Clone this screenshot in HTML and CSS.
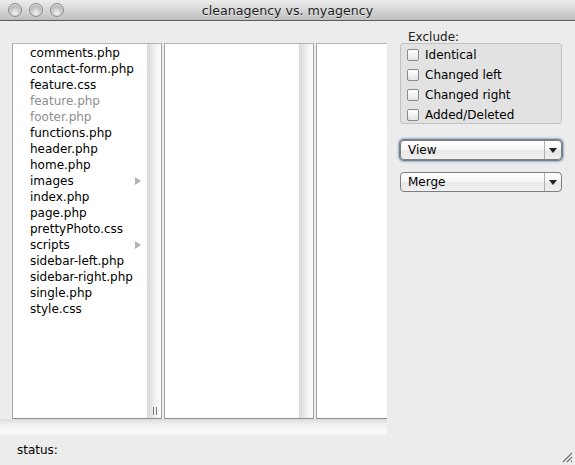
FILE: index.html
```html
<!DOCTYPE html>
<html lang="en">

<head>
    <meta charset="utf-8">
    <meta name="viewport" content="width=device-width, initial-scale=1.0">
    <title>cleanagency vs. myagency</title>
    <link rel="stylesheet" href="styles.css">
</head>

<body>
    <div class="window">

        <header class="titlebar">
            <div class="lights">
                <span class="light"></span>
                <span class="light"></span>
                <span class="light"></span>
            </div>
            <div class="title">cleanagency vs. myagency</div>
            <div></div>
        </header>

        <main class="content">
            <section class="browser">
                <div class="columns">
                    <div class="column">
                        <ul class="files">
                            <li>comments.php</li>
                            <li>contact-form.php</li>
                            <li>feature.css</li>
                            <li class="same">feature.php</li>
                            <li class="same">footer.php</li>
                            <li>functions.php</li>
                            <li>header.php</li>
                            <li>home.php</li>
                            <li class="folder">images</li>
                            <li>index.php</li>
                            <li>page.php</li>
                            <li>prettyPhoto.css</li>
                            <li class="folder">scripts</li>
                            <li>sidebar-left.php</li>
                            <li>sidebar-right.php</li>
                            <li>single.php</li>
                            <li>style.css</li>
                        </ul>
                        <div class="scroller">
                            <span class="grip"></span>
                        </div>
                    </div>
                    <div class="column">
                        <ul class="files"></ul>
                        <div class="scroller"></div>
                    </div>
                    <div class="column">
                        <ul class="files"></ul>
                        <div class="scroller"></div>
                    </div>
                </div>
                <div class="hscroll"></div>
            </section>

            <aside class="side">
                <div class="label">Exclude:</div>
                <div class="group">
                    <label class="check"><span class="box"></span>Identical</label>
                    <label class="check"><span class="box"></span>Changed left</label>
                    <label class="check"><span class="box"></span>Changed right</label>
                    <label class="check"><span class="box"></span>Added/Deleted</label>
                </div>
                <div class="popup focused">
                    <span class="popup-text">View</span>
                    <span class="popup-arrow"></span>
                </div>
                <div class="popup">
                    <span class="popup-text">Merge</span>
                    <span class="popup-arrow"></span>
                </div>
            </aside>
        </main>

        <footer class="status">
            <span class="status-text">status:</span>
            <svg class="resize" width="11" height="11" viewBox="0 0 11 11">
                <path d="M10 1 L1 10 M10 5 L5 10 M10 9 L9 10" stroke="#6e6e6e" stroke-width="1.2" />
                <path d="M11 2 L2 11 M11 6 L6 11" stroke="#ffffff" stroke-width="1" />
            </svg>
        </footer>

    </div>
</body>

</html>
```

FILE: styles.css
```css
* {
    box-sizing: border-box;
}

body {
    margin: 0;
    font-family: "DejaVu Sans", "Liberation Sans", sans-serif;
    font-size: 12px;
    color: #000;
    background: #ececec;
}

.window {
    width: 575px;
    height: 465px;
    display: flex;
    flex-direction: column;
    overflow: hidden;
}

/* title bar */

.titlebar {
    height: 21px;
    flex: none;
    display: grid;
    grid-template-columns: 1fr auto 1fr;
    align-items: center;
    background: linear-gradient(#ececec, #d6d6d6 50%, #bfbfbf);
    border-bottom: 1px solid #5c5c5c;
}

.lights {
    display: flex;
    gap: 7px;
    padding-left: 8px;
}

.light {
    width: 14px;
    height: 14px;
    border-radius: 50%;
    border: 1px solid #8d8d8d;
    background: radial-gradient(circle at 50% 75%, #f4f4f4, #c8c8c8 45%, #9c9c9c 90%);
    box-shadow: inset 0 1px 1px rgba(255, 255, 255, .8);
}

.title {
    font-size: 12.6px;
    color: #1e1e1e;
    text-shadow: 0 1px 0 rgba(255, 255, 255, .5);
}

/* main area */

.content {
    flex: 1;
    display: flex;
}

.browser {
    width: 387px;
    flex: none;
    display: flex;
    flex-direction: column;
    padding-top: 22px;
    overflow: hidden;
}

.columns {
    height: 376px;
    display: flex;
    gap: 2px;
    padding-left: 12px;
}

.column {
    width: 150px;
    flex: none;
    display: flex;
    background: #fff;
    border: 1px solid #a6a6a6;
    border-top-color: #b6b6b6;
    border-bottom-color: #8e8e8e;
}

.files {
    flex: 1;
    list-style: none;
    margin: 0;
    padding: 1px 0 0;
}

.files li {
    height: 16px;
    line-height: 16px;
    padding: 0 6px 0 17px;
    display: flex;
    justify-content: space-between;
    align-items: center;
    white-space: nowrap;
}

.files .same {
    color: #8e8e8e;
}

.files .folder::after {
    content: "";
    border-left: 6px solid #b2b2b2;
    border-top: 4px solid transparent;
    border-bottom: 4px solid transparent;
}

.scroller {
    width: 14px;
    flex: none;
    display: flex;
    justify-content: center;
    align-items: flex-end;
    padding-bottom: 3px;
    background: linear-gradient(to right, #d7d7d7, #ebebeb 40%, #f6f6f6 70%, #fbfbfb);
}

.grip {
    width: 4px;
    height: 8px;
    margin-left: 1px;
    border-left: 1px solid #7a7a7a;
    border-right: 1px solid #7a7a7a;
}

.hscroll {
    height: 16px;
    background: linear-gradient(#dcdcdc, #f0f0f0 35%, #fafafa 70%, #f5f5f5);
}

/* right side controls */

.side {
    width: 162px;
    margin-left: 13px;
    padding-top: 10px;
}

.label {
    height: 12px;
    line-height: 12px;
    padding-left: 8px;
    color: #222;
}

.group {
    height: 81px;
    padding: 1px 0 0 6px;
    background: #e2e2e2;
    border: 1px solid #c2c2c2;
    border-radius: 3px;
}

.check {
    height: 20px;
    display: flex;
    align-items: center;
    gap: 6px;
}

.box {
    width: 12px;
    height: 12px;
    border: 1px solid #8a8a8a;
    border-radius: 2px;
    background: linear-gradient(#ffffff, #f2f2f2 50%, #e4e4e4);
}

.popup {
    height: 20px;
    display: flex;
    border: 1px solid #7e7e7e;
    border-radius: 4px;
    background: linear-gradient(#ffffff, #f6f6f6 45%, #e7e7e7 55%, #f1f1f1);
}

.popup.focused {
    margin-top: 16px;
    box-shadow: 0 0 0 1px #6f7f97, 0 0 2px 2px #a3b0c2;
}

.popup + .popup {
    margin-top: 12px;
}

.popup-text {
    flex: 1;
    padding-left: 7px;
    line-height: 18px;
}

.popup-arrow {
    width: 17px;
    display: flex;
    justify-content: center;
    align-items: center;
    border-left: 1px solid #b0b0b0;
}

.popup-arrow::after {
    content: "";
    border-top: 5px solid #222;
    border-left: 4px solid transparent;
    border-right: 4px solid transparent;
}

/* status line */

.status {
    height: 30px;
    flex: none;
    display: flex;
    justify-content: space-between;
    align-items: flex-end;
    padding: 0 2px 2px 17px;
}

.status-text {
    align-self: center;
    padding-top: 1px;
}
```
